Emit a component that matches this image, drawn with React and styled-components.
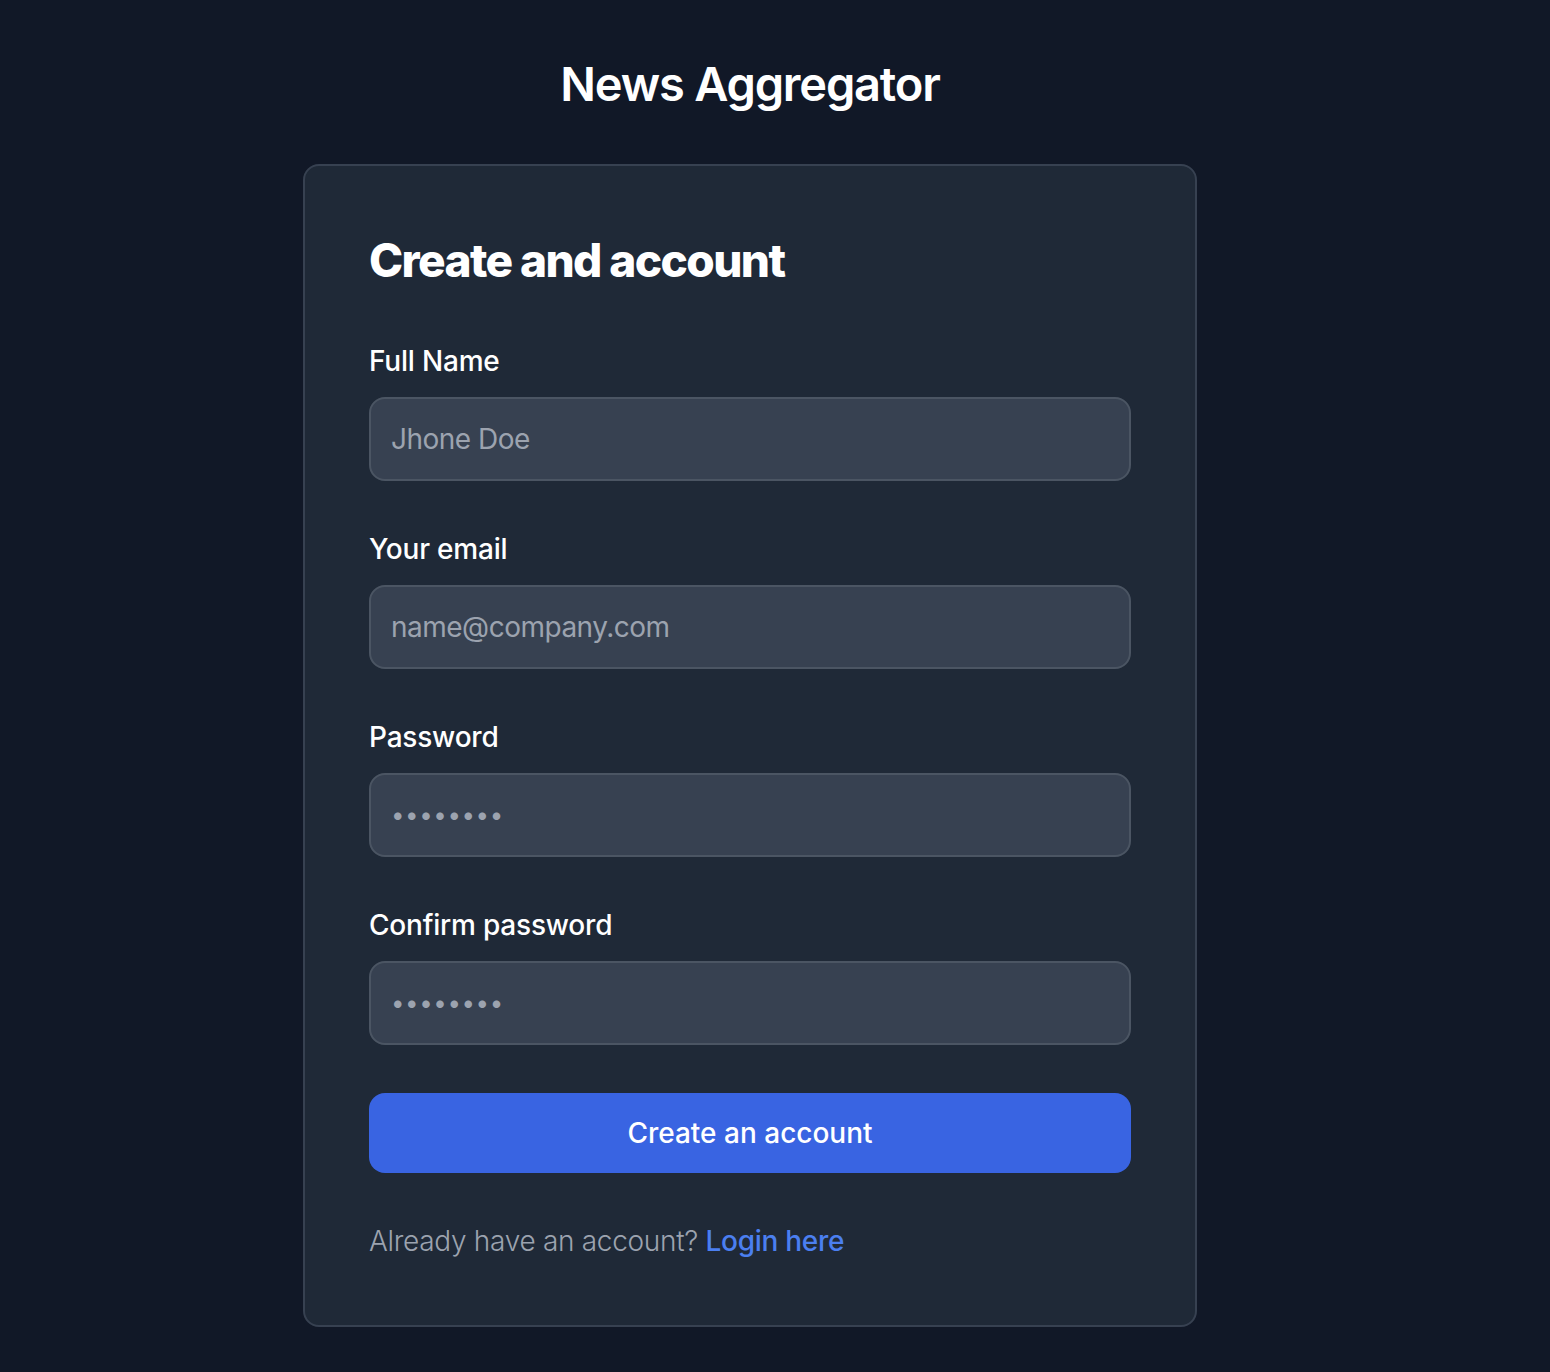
import React from 'react';
import styled, { createGlobalStyle } from 'styled-components';

const GlobalStyle = createGlobalStyle`
	* {
		box-sizing: border-box;
	}

	body {
		margin: 0;
		background: #111827;
		font-family: Inter, "Noto Sans", sans-serif;
		-webkit-font-smoothing: antialiased;
	}
`;

const Page = styled.section`
	display: flex;
	flex-direction: column;
	align-items: center;
	min-height: 100vh;
	padding: 52px 50px 46px 0;
`;

const Brand = styled.a`
	display: flex;
	align-items: center;
	margin-bottom: 48px;
	font: 600 47px/64px Inter, sans-serif;
	letter-spacing: -1.2px;
	color: #fff;
	text-decoration: none;
`;

const Card = styled.div`
	width: 894px;
	padding: 64px;
	background: #1f2937;
	border: 2px solid #374151;
	border-radius: 16px;
`;

const Heading = styled.h1`
	margin: 0 0 51px;
	font: 800 46px/60px Inter, sans-serif;
	letter-spacing: -1.6px;
	color: #fff;
`;

const Form = styled.form`
	display: flex;
	flex-direction: column;
	gap: 48px;
`;

const Field = styled.div`
	display: flex;
	flex-direction: column;
`;

const Label = styled.label`
	margin-bottom: 16px;
	font: 500 28px/40px Inter, sans-serif;
	letter-spacing: -0.2px;
	color: #fff;
`;

const Input = styled.input`
	width: 100%;
	height: 84px;
	padding: ${props => (props.$secret ? '18px 20px 22px' : '20px')};
	font: 400 28px/40px Inter, sans-serif;
	letter-spacing: -0.5px;
	color: #fff;
	background: #374151;
	border: 2px solid #4b5563;
	border-radius: 16px;
	outline: none;

	&::placeholder {
		color: #9ca3af;
		font-size: ${props => (props.$secret ? '24px' : '28px')};
		letter-spacing: ${props => (props.$secret ? '0.6px' : '-0.5px')};
	}
`;

const Button = styled.button`
	height: 80px;
	padding: 20px 40px;
	font: 500 28px/40px Inter, sans-serif;
	color: #fff;
	background: #3964e2;
	border: none;
	border-radius: 16px;
	cursor: pointer;
`;

const Footer = styled.p`
	margin: 0;
	font: 300 28px/40px Inter, sans-serif;
	letter-spacing: -0.3px;
	color: #9ca3af;
`;

const Link = styled.a`
	font-weight: 500;
	color: #4b7ff0;
	text-decoration: none;
`;

const fields = [
	{ id: 'name', label: 'Full Name', placeholder: 'Jhone Doe' },
	{ id: 'email', label: 'Your email', placeholder: 'name@company.com' },
	{ id: 'password', label: 'Password', placeholder: '••••••••', secret: true },
	{ id: 'confirm', label: 'Confirm password', placeholder: '••••••••', secret: true },
];

export default function App() {
	return (
		<>
			<GlobalStyle />
			<Page>
				<Brand href="#">News Aggregator</Brand>
				<Card>
					<Heading>Create and account</Heading>
					<Form onSubmit={e => e.preventDefault()}>
						{fields.map(field => (
							<Field key={field.id}>
								<Label htmlFor={field.id}>{field.label}</Label>
								<Input
									id={field.id}
									type="text"
									placeholder={field.placeholder}
									$secret={field.secret}
								/>
							</Field>
						))}
						<Button type="submit">Create an account</Button>
						<Footer>
							Already have an account? <Link href="#">Login here</Link>
						</Footer>
					</Form>
				</Card>
			</Page>
		</>
	);
}
